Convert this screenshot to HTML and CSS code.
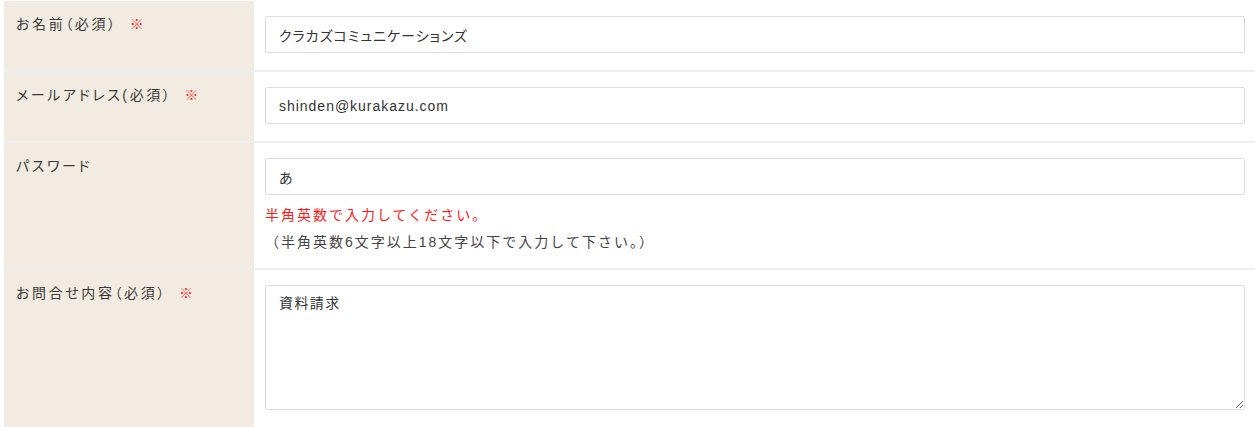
FILE: index.html
```html
<!DOCTYPE html>
<html lang="ja">
<head>
  <meta charset="UTF-8">
  <meta name="viewport" content="width=device-width, initial-scale=1.0">
  <title>お問合せフォーム</title>
  <link rel="stylesheet" href="styles.css">
</head>
<body>
  <form class="contact-form">
    <div class="form-row">
      <div class="form-label">お名前（必須）<span class="required">※</span></div>
      <div class="form-field">
        <input type="text" class="text-input" value="クラカズコミュニケーションズ">
      </div>
    </div>

    <div class="form-row">
      <div class="form-label">メールアドレス(必須）<span class="required">※</span></div>
      <div class="form-field">
        <input type="email" class="text-input" value="shinden@kurakazu.com">
      </div>
    </div>

    <div class="form-row">
      <div class="form-label">パスワード</div>
      <div class="form-field">
        <input type="text" class="text-input" value="あ">
        <p class="error">半角英数で入力してください。</p>
        <p class="note">（半角英数6文字以上18文字以下で入力して下さい。）</p>
      </div>
    </div>

    <div class="form-row">
      <div class="form-label">お問合せ内容（必須）<span class="required">※</span></div>
      <div class="form-field">
        <textarea class="text-area">資料請求</textarea>
      </div>
    </div>
  </form>
</body>
</html>
```

FILE: styles.css
```css
body {
  font-family: "Liberation Sans", "Noto Sans CJK JP", sans-serif;
  background-color: #fff;
  color: #333;
  margin: 0;
  padding: 0;
}
.contact-form {
  margin: 0 0 0 4px;
  padding-top: 1px;
}
.form-row {
  display: grid;
  grid-template-columns: 250px 1fr;
  border-bottom: 2px solid #eee;
}
.form-label {
  background-color: #f2ebe1;
  padding: 13px 12px;
  font-size: 14px;
  line-height: 21px;
  letter-spacing: 2.6px;
  font-feature-settings: "palt";
  color: #3a3a3a;
}
.required {
  color: #ff2a2a;
  margin-left: 12px;
}
.form-field {
  padding: 15px 10px 17px 11px;
}
.text-input, .text-area {
  display: block;
  width: 100%;
  box-sizing: border-box;
  border: 1px solid #ddd;
  border-radius: 2px;
  font-family: inherit;
  font-size: 14px;
  color: #333;
  background: #fff;
  margin: 0;
}
.text-input {
  height: 37px;
  padding: 0 13px;
  font-feature-settings: "palt";
  letter-spacing: 0.07em;
}
.text-area {
  height: 125px;
  padding: 7px 13px;
  line-height: 21px;
  letter-spacing: 0.1em;
}
.error, .note {
  margin: 0;
  font-size: 14px;
  line-height: 18px;
  letter-spacing: 2px;
}
.error {
  color: #ff1a1a;
  margin-top: 11px;
}
.note {
  margin-top: 9px;
  color: #444;
}
```
